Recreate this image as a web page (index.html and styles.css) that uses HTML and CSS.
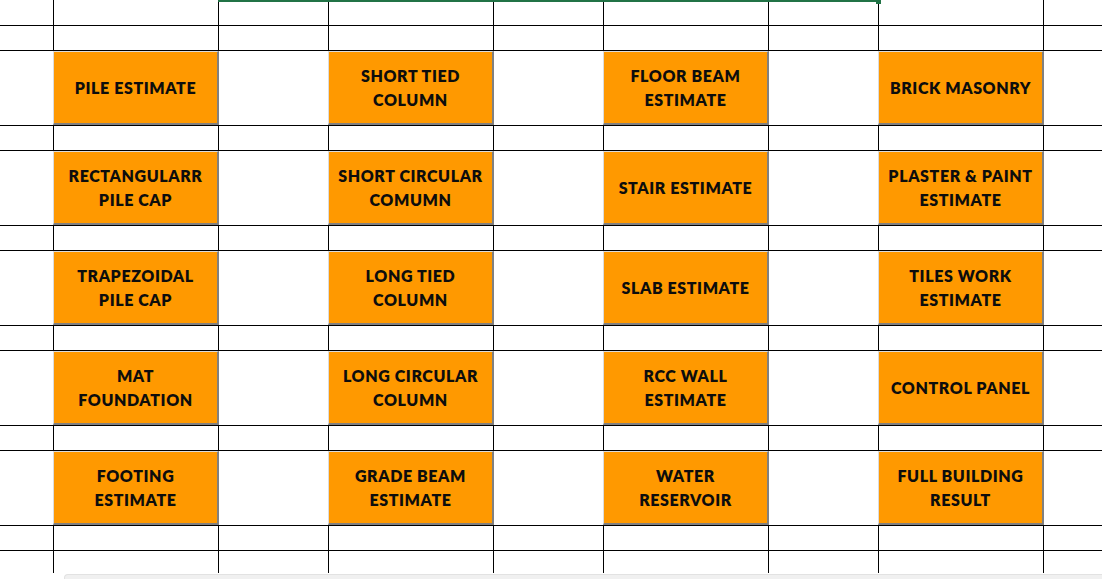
FILE: index.html
```html
<!DOCTYPE html>
<html>
<head>
<meta charset="utf-8">
<link rel="stylesheet" href="styles.css">
</head>
<body>
<div class="sheet">
  <div class="grid">
  <div class="row short first">
    <div class="c"></div><div class="c"></div><div class="c"></div><div class="c"></div><div class="c"></div><div class="c"></div><div class="c"></div><div class="c"></div><div class="c"></div>
  </div>
  <div class="row short">
    <div class="c"></div><div class="c"></div><div class="c"></div><div class="c"></div><div class="c"></div><div class="c"></div><div class="c"></div><div class="c"></div><div class="c"></div>
  </div>
  <div class="row tall">
    <div class="t"></div>
    <div class="t"><div class="btn">PILE ESTIMATE</div></div>
    <div class="t"></div>
    <div class="t"><div class="btn">SHORT TIED<br>COLUMN</div></div>
    <div class="t"></div>
    <div class="t"><div class="btn">FLOOR BEAM<br>ESTIMATE</div></div>
    <div class="t"></div>
    <div class="t"><div class="btn">BRICK MASONRY</div></div>
    <div class="t"></div>
  </div>
  <div class="row short">
    <div class="c"></div><div class="c"></div><div class="c"></div><div class="c"></div><div class="c"></div><div class="c"></div><div class="c"></div><div class="c"></div><div class="c"></div>
  </div>
  <div class="row tall">
    <div class="t"></div>
    <div class="t"><div class="btn">RECTANGULARR<br>PILE CAP</div></div>
    <div class="t"></div>
    <div class="t"><div class="btn">SHORT CIRCULAR<br>COMUMN</div></div>
    <div class="t"></div>
    <div class="t"><div class="btn">STAIR ESTIMATE</div></div>
    <div class="t"></div>
    <div class="t"><div class="btn">PLASTER &amp; PAINT<br>ESTIMATE</div></div>
    <div class="t"></div>
  </div>
  <div class="row short">
    <div class="c"></div><div class="c"></div><div class="c"></div><div class="c"></div><div class="c"></div><div class="c"></div><div class="c"></div><div class="c"></div><div class="c"></div>
  </div>
  <div class="row tall">
    <div class="t"></div>
    <div class="t"><div class="btn">TRAPEZOIDAL<br>PILE CAP</div></div>
    <div class="t"></div>
    <div class="t"><div class="btn">LONG TIED<br>COLUMN</div></div>
    <div class="t"></div>
    <div class="t"><div class="btn">SLAB ESTIMATE</div></div>
    <div class="t"></div>
    <div class="t"><div class="btn">TILES WORK<br>ESTIMATE</div></div>
    <div class="t"></div>
  </div>
  <div class="row short">
    <div class="c"></div><div class="c"></div><div class="c"></div><div class="c"></div><div class="c"></div><div class="c"></div><div class="c"></div><div class="c"></div><div class="c"></div>
  </div>
  <div class="row tall">
    <div class="t"></div>
    <div class="t"><div class="btn">MAT<br>FOUNDATION</div></div>
    <div class="t"></div>
    <div class="t"><div class="btn">LONG CIRCULAR<br>COLUMN</div></div>
    <div class="t"></div>
    <div class="t"><div class="btn">RCC WALL<br>ESTIMATE</div></div>
    <div class="t"></div>
    <div class="t"><div class="btn">CONTROL PANEL</div></div>
    <div class="t"></div>
  </div>
  <div class="row short">
    <div class="c"></div><div class="c"></div><div class="c"></div><div class="c"></div><div class="c"></div><div class="c"></div><div class="c"></div><div class="c"></div><div class="c"></div>
  </div>
  <div class="row tall">
    <div class="t"></div>
    <div class="t"><div class="btn">FOOTING<br>ESTIMATE</div></div>
    <div class="t"></div>
    <div class="t"><div class="btn">GRADE BEAM<br>ESTIMATE</div></div>
    <div class="t"></div>
    <div class="t"><div class="btn">WATER<br>RESERVOIR</div></div>
    <div class="t"></div>
    <div class="t"><div class="btn">FULL BUILDING<br>RESULT</div></div>
    <div class="t"></div>
  </div>
  <div class="row short">
    <div class="c"></div><div class="c"></div><div class="c"></div><div class="c"></div><div class="c"></div><div class="c"></div><div class="c"></div><div class="c"></div><div class="c"></div>
  </div>
  <div class="row short last">
    <div class="c"></div><div class="c"></div><div class="c"></div><div class="c"></div><div class="c"></div><div class="c"></div><div class="c"></div><div class="c"></div><div class="c"></div>
  </div>
  </div>
  <div class="selection"></div>
  <div class="handle"></div>
  <div class="scrollbar"></div>
</div>
</body>
</html>
```

FILE: styles.css
```css
* { box-sizing: border-box; }
html, body { margin: 0; padding: 0; background: #ffffff; }
body {
  width: 1102px;
  height: 579px;
  overflow: hidden;
  font-family: Lato, "Open Sans", "Liberation Sans", sans-serif;
}
.sheet {
  position: relative;
  width: 1102px;
  height: 579px;
}
.grid {
  height: 573px;
  overflow: hidden;
}
.row {
  display: grid;
  grid-template-columns: 54px 165px 110px 165px 110px 165px 110px 165px 1fr;
  border-bottom: 1px solid #000;
}
.row.short { height: 25px; }
.row.first { height: 26px; }
.row.tall { height: 75px; }
.row.last { height: 22px; border-bottom: none; }
.c { border-right: 1px solid #000; }
.c:last-child { border-right: none; }
.btn {
  height: 100%;
  width: 166px;
  margin-left: -1px;
  background: #ff9900;
  border-top: 1px solid #dcdcdc;
  border-left: 1px solid #dcdcdc;
  border-right: 2px solid #808080;
  border-bottom: 2px solid #808080;
  display: flex;
  align-items: center;
  justify-content: center;
  text-align: center;
  font-weight: 800;
  font-size: 16px;
  letter-spacing: 0.6px;
  line-height: 24px;
  padding-top: 1px;
  color: #0d0d0d;
}
.selection {
  position: absolute;
  left: 218px;
  top: 0;
  width: 660px;
  height: 2px;
  background: #217346;
}
.handle {
  position: absolute;
  left: 876px;
  top: 0;
  width: 5px;
  height: 4px;
  background: #217346;
}
.scrollbar {
  position: absolute;
  left: 64px;
  top: 574px;
  right: 0;
  height: 5px;
  background: #f0f0f0;
  border-top: 1px solid #e2e2e2;
  border-left: 1px solid #e2e2e2;
  border-top-left-radius: 4px;
}
```
